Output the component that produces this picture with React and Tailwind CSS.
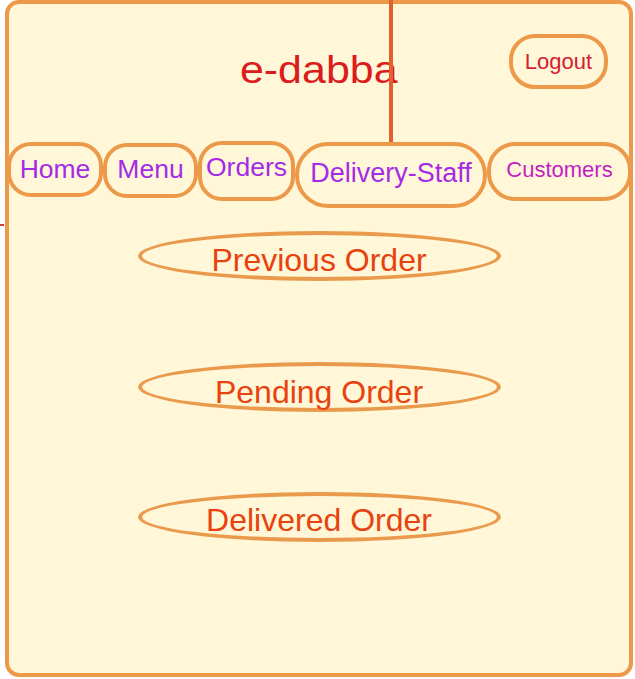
export default function App() {
  const font = { fontFamily: '"Liberation Sans", Arial, sans-serif' };
  const nav = [
    { label: "Home", cls: "mt-[1px] w-[96px] h-[55px] rounded-[24px] text-[26.5px] text-[#a52be6] -ml-[2px]" },
    { label: "Menu", cls: "mt-[2px] w-[95px] h-[55px] rounded-[24px] text-[26.5px] text-[#a52be6] pb-[2px]" },
    { label: "Orders", cls: "mt-0 w-[97px] h-[60px] rounded-[24px] text-[26.5px] text-[#a52be6] pb-[7px]" },
    { label: "Delivery-Staff", cls: "mt-[1px] w-[192px] h-[66px] rounded-[33px] text-[27px] text-[#a52be6] pb-[4px]" },
    { label: "Customers", cls: "mt-[1px] w-[145px] h-[59px] rounded-[28px] text-[22px] text-[#c21fc6] pb-[4px]" },
  ];
  const orders = [
    { label: "Previous Order", cls: "mt-[23px] pt-[7px]" },
    { label: "Pending Order", cls: "mt-[81px] pt-[10px]" },
    { label: "Delivered Order", cls: "mt-[80px] pt-[6px]" },
  ];
  return (
    <div className="relative w-[635px] h-[679px] bg-white overflow-hidden" style={font}>
      <div className="ml-[5px] w-[628px] h-[677px] border-[4px] border-[#ec9a4a] rounded-[14px] bg-[#fff7d8] flex flex-col">
        <div className="h-[137px] grid grid-cols-[1fr_auto_1fr] items-start">
          <div />
          <div className="mt-[47px] text-[38px] leading-none text-[#dc1c1c]">
            <span className="inline-block scale-x-[1.13] origin-center">e-dabba</span>
          </div>
          <div className="flex justify-end pr-[21px]">
            <div className="mt-[30px] w-[99px] h-[55px] border-[4px] border-[#ec9a4a] rounded-[26px] flex items-center justify-center text-[22px] leading-none text-[#d42030]">
              Logout
            </div>
          </div>
        </div>
        <div className="flex items-start">
          {nav.map((n) => (
            <div
              key={n.label}
              className={`shrink-0 border-[4px] border-[#ec9a4a] flex items-center justify-center leading-none ${n.cls}`}
            >
              {n.label}
            </div>
          ))}
        </div>
        <div className="flex flex-col items-center">
          {orders.map((o) => (
            <div
              key={o.label}
              className={`w-[363px] h-[50px] border-[4px] border-[#ea9a4c] rounded-[50%] flex items-center justify-center text-[32px] leading-none text-[#e8420e] ${o.cls}`}
            >
              {o.label}
            </div>
          ))}
        </div>
      </div>
      <div className="absolute left-[389px] top-0 w-[4px] h-[142px] bg-[#e0602e]" />
      <div className="absolute left-0 top-[224px] w-[4px] h-[2px] bg-[#d04040]" />
    </div>
  );
}
